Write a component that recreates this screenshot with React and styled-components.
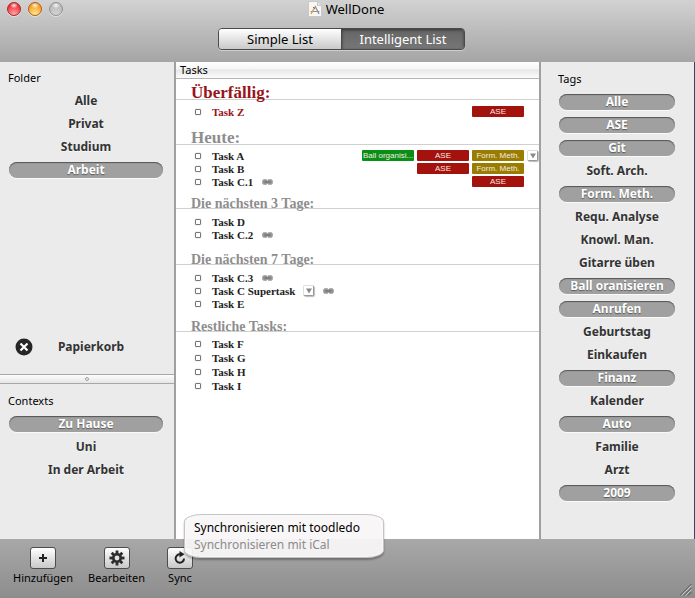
import React, { useState } from "react";
import styled, { createGlobalStyle, css } from "styled-components";

const UI_FONT = '"Noto Sans", "Open Sans", sans-serif';
const TASK_FONT = '"Liberation Serif", serif';

const GlobalStyle = createGlobalStyle`
  * { box-sizing: border-box; }
  body { margin: 0; background: #ebebeb; font-family: ${UI_FONT}; color: #000; }
  button { font-family: inherit; color: inherit; margin: 0; padding: 0; border: 0; background: none; }
  ul { list-style: none; margin: 0; padding: 0; }
`;

const Shell = styled.div`
  display: flex;
  flex-direction: column;
  min-height: 100vh;
`;

const Header = styled.header`
  height: 62px;
  flex: none;
  background: linear-gradient(#d2d2d2, #a5a5a5);
`;

const TitleBar = styled.div`
  display: grid;
  grid-template-columns: 1fr auto 1fr;
  align-items: center;
  height: 18px;
  padding: 0 10px 0 7px;
`;

const Lights = styled.div`
  display: flex;
  gap: 7px;
`;

const lightColors = {
  red: ["#ffa6a8", "#ee2b35", "#a5282c"],
  yellow: ["#ffe98f", "#f6981f", "#a8621c"],
  gray: ["#d4d4d4", "#b9b9b9", "#929292"],
};

const Light = styled.button`
  width: 14px;
  height: 14px;
  border-radius: 50%;
  border: 1px solid ${(p) => lightColors[p.$tone][2]};
  background:
    radial-gradient(ellipse 4px 3px at 50% 20%, rgba(255, 255, 255, 0.9), rgba(255, 255, 255, 0) 100%),
    radial-gradient(circle at 50% 90%, ${(p) => lightColors[p.$tone][0]}, ${(p) => lightColors[p.$tone][1]} 75%);
  box-shadow: 0 1px 0 rgba(255, 255, 255, 0.5);
`;

const Title = styled.h1`
  display: flex;
  align-items: center;
  gap: 4px;
  margin: 0;
  font-size: 13px;
  line-height: 18px;
  font-weight: 400;
`;

const SegmentRow = styled.div`
  display: flex;
  justify-content: center;
  padding: 10px 12px 0 0;
`;

const Segments = styled.div`
  display: flex;
  width: 247px;
  height: 22px;
  border: 1px solid #4a4a4a;
  border-radius: 4px;
  overflow: hidden;
  box-shadow: 0 1px 0 rgba(255, 255, 255, 0.4);
`;

const Segment = styled.button`
  flex: 1;
  font-size: 13px;
  line-height: 20px;
  background: linear-gradient(#ffffff, #c9c9c9);
  ${(p) =>
    p.$on &&
    css`
      color: #fff;
      border-left: 1px solid #4a4a4a;
      background: linear-gradient(#656565, #777777);
      box-shadow: inset 0 1px 3px rgba(0, 0, 0, 0.5);
    `}
`;

const Body = styled.div`
  display: flex;
  flex: 1;
`;

const Sidebar = styled.aside`
  display: flex;
  flex-direction: column;
  flex: none;
  width: 176px;
  background: #ebebeb;
  border-right: 2px solid #a0a0a0;
`;

const TagBar = styled.aside`
  flex: none;
  width: 156px;
  padding: 9px 19px 0 18px;
  background: #ebebeb;
  border-left: 2px solid #a0a0a0;
  border-right: 1px solid #32496b;
`;

const Group = styled.section`
  display: flex;
  flex-direction: column;
  padding: 8px 11px 0 9px;
  ${(p) => (p.$grow ? "flex: 1;" : "height: 155px; padding-top: 9px;")}
`;

const GroupTitle = styled.h2`
  margin: 0 -1px 7px;
  font-size: 11px;
  line-height: 16px;
  font-weight: 400;
`;

const PillList = styled.ul`
  display: grid;
  gap: 7px;
`;

const Pill = styled.button`
  display: block;
  width: 100%;
  height: 16px;
  border-radius: 8px;
  font-size: 12px;
  line-height: 16px;
  font-weight: 700;
  text-align: center;
  color: #333;
  text-shadow: 0 1px 0 rgba(255, 255, 255, 0.6);
  ${(p) =>
    p.$on &&
    css`
      color: #fff;
      text-shadow: 0 1px 1px #5a5a5a;
      background: #a0a0a0;
      box-shadow: inset 0 1px 1px #555, 0 1px 0 #fafafa;
    `}
`;

const Trash = styled.button`
  display: grid;
  grid-template-columns: 18px 1fr 12px;
  align-items: center;
  width: 100%;
  margin: auto 0 17px;
  padding: 0 2px 0 6px;
  font-size: 12px;
  line-height: 20px;
  font-weight: 700;
  color: #333;
`;

const Splitter = styled.div`
  display: flex;
  align-items: center;
  justify-content: center;
  height: 10px;
  border: solid #a8a8a8;
  border-width: 1px 0;
  background: linear-gradient(#fdfdfd, #e6e6e6);
`;

const SplitterDot = styled.span`
  width: 4px;
  height: 4px;
  border: 1px solid #a0a0a0;
  border-radius: 50%;
`;

const Main = styled.main`
  flex: 1;
  min-width: 0;
  background: #fff;
`;

const ColumnHeader = styled.h2`
  margin: 0;
  height: 17px;
  padding-left: 4px;
  border-bottom: 1px solid #b4b4b4;
  font-size: 11px;
  line-height: 16px;
  font-weight: 400;
  background: linear-gradient(#ffffff, #f6f6f6 40%, #e8e8e8 50%, #fbfbfb);
`;

const SectionTitle = styled.h3`
  display: flex;
  align-items: flex-end;
  height: ${(p) => p.$height}px;
  margin: 0;
  padding-left: 15px;
  border-bottom: 1px solid #d0d0d0;
  font-family: ${TASK_FONT};
  font-size: ${(p) => (p.$large ? 17 : 14)}px;
  line-height: ${(p) => (p.$large ? 13 : 8)}px;
  color: ${(p) => (p.$alert ? "#98141a" : "#8e8e8e")};
`;

const TaskList = styled.ul`
  padding-top: ${(p) => p.$top}px;
`;

const TaskRow = styled.li`
  display: flex;
  align-items: center;
  height: ${(p) => (p.$loose ? 14 : 13)}px;
  padding-left: 19px;
  font-family: ${TASK_FONT};
  font-size: 11px;
  font-weight: 700;
  color: ${(p) => (p.$alert ? "#98141a" : "#222")};
`;

const TaskLabel = styled.label`
  display: flex;
  align-items: center;
  gap: 11px;
`;

const Check = styled.input`
  appearance: none;
  width: 6px;
  height: 6px;
  margin: 0;
  border: 1px solid #777;
  border-radius: 1px;
  box-shadow: 0 0 1px #777;
  &:checked { background: #777; }
`;

const Link = styled.span`
  display: flex;
  margin-left: 9px;
`;

const Caret = styled.button`
  display: flex;
  align-items: center;
  justify-content: center;
  width: 11px;
  height: 11px;
  margin-left: ${(p) => (p.$inline ? 8 : 0)}px;
  border: 1px solid #ddd;
  border-right-color: #999;
  border-bottom-color: #999;
  border-radius: 2px;
  background: #fff;
  box-shadow: 1px 1px 1px #bbb;
`;

const Chips = styled.div`
  display: flex;
  gap: 3px;
  margin-left: auto;
`;

const ChipSlot = styled.span`
  width: 12px;
`;

const chipColors = { red: "#a3120d", olive: "#9a7d00", green: "#0a8f14" };

const Chip = styled.span`
  width: 52px;
  height: 11px;
  border-radius: 1px;
  overflow: hidden;
  white-space: nowrap;
  text-align: center;
  font-family: "Liberation Sans", sans-serif;
  font-size: 8px;
  line-height: 11px;
  font-weight: 400;
  color: #f5e9e4;
  background: ${(p) => chipColors[p.$tone]};
`;

const Footer = styled.footer`
  display: flex;
  align-items: flex-start;
  justify-content: space-between;
  height: 59px;
  flex: none;
  padding: 8px 3px 2px 13px;
  background: linear-gradient(#a8a8a8, #8d8d8d);
`;

const Tools = styled.div`
  display: flex;
  gap: 15px;
`;

const Tool = styled.div`
  display: flex;
  flex-direction: column;
  align-items: center;
  min-width: 40px;
  font-size: 11px;
  line-height: 18px;
`;

const Anchor = styled.div`
  position: relative;
`;

const ToolButton = styled.button`
  display: flex;
  align-items: center;
  justify-content: center;
  width: 26px;
  height: 22px;
  border: 1px solid #4d4d4d;
  border-radius: 3px;
  background: linear-gradient(#ffffff, #c8c8c8);
`;

const SyncMenu = styled.div`
  position: absolute;
  left: 17px;
  top: -33px;
  display: flex;
  flex-direction: column;
  align-items: flex-start;
  min-width: 200px;
  padding: 4px 18px 4px 9px;
  border: 1px solid #c4c4c4;
  border-radius: 18px / 8px;
  background: rgba(248, 245, 247, 0.94);
  box-shadow: 0 2px 2px rgba(0, 0, 0, 0.3), inset 0 0 3px #fff;
`;

const SyncItem = styled.button`
  font-size: 12px;
  line-height: 17px;
  white-space: nowrap;
  color: ${(p) => (p.disabled ? "#8c8c8c" : "#000")};
`;

const Grip = styled.svg`
  align-self: flex-end;
`;

const AppIcon = () => (
  <svg width="14" height="16" viewBox="0 0 14 16" aria-hidden="true">
    <path d="M.5.5h9l4 4v11H.5z" fill="#f7f7f5" stroke="#c8c8c8" />
    <path d="M9.5.5v4h4" fill="#e4e4e4" stroke="#c8c8c8" />
    <path d="M2.5 10.5h9" stroke="#9c918a" />
    <path d="M3 13l4-7" stroke="#d89a40" strokeWidth="1.3" />
    <path d="M7 5l4 8" stroke="#858ca0" strokeWidth="1.3" />
    <path d="M5 6l2 2" stroke="#bf5648" />
  </svg>
);

const TrashIcon = () => (
  <svg width="18" height="18" viewBox="0 0 18 18" aria-hidden="true">
    <circle cx="9" cy="9" r="8.5" fill="#262626" />
    <path d="M5.5 5.5l7 7m0-7l-7 7" stroke="#fff" strokeWidth="2.2" />
  </svg>
);

const LinkIcon = () => (
  <svg width="11" height="6" viewBox="0 0 11 6" role="img" aria-label="Link">
    <rect x=".5" y=".5" width="5" height="5" rx="2" fill="#959595" stroke="#a5a5a5" />
    <rect x="5.5" y=".5" width="5" height="5" rx="2" fill="#959595" stroke="#a5a5a5" />
    <path d="M2.5 3h6" stroke="#777" strokeWidth="1.5" />
  </svg>
);

const CaretIcon = () => (
  <svg width="6" height="6" viewBox="0 0 6 6" aria-hidden="true">
    <path d="M0 .5h6L3 5.5z" fill="#8a8a8a" />
  </svg>
);

const PlusIcon = () => (
  <svg width="8" height="8" viewBox="0 0 8 8" aria-hidden="true">
    <path d="M4 0v8M0 4h8" stroke="#222" strokeWidth="2" />
  </svg>
);

const GearIcon = () => (
  <svg width="16" height="16" viewBox="-8 -8 16 16" aria-hidden="true">
    <g fill="#2e2e2e">
      {[0, 45, 90, 135].map((a) => (
        <rect key={a} x="-1.4" y="-7.5" width="2.8" height="15" transform={`rotate(${a})`} />
      ))}
      <circle r="5" />
    </g>
    <circle r="2.4" fill="#e4e4e4" />
  </svg>
);

const SyncIcon = () => (
  <svg width="12" height="14" viewBox="0 0 12 14" aria-hidden="true">
    <path d="M10 7.5a4.2 4.2 0 1 1-4-4.2" fill="none" stroke="#222" strokeWidth="2" />
    <path d="M5.5 0l5 3.3-5 3.3z" fill="#222" />
  </svg>
);

const sections = [
  {
    title: "Überfällig:", large: true, alert: true, height: 21, top: 5,
    tasks: [{ name: "Task Z", chips: [["ASE", "red"]] }],
  },
  {
    title: "Heute:", large: true, height: 27, top: 4,
    tasks: [
      { name: "Task A", chips: [["Ball organisi...", "green"], ["ASE", "red"], ["Form. Meth.", "olive"]], more: true },
      { name: "Task B", chips: [["ASE", "red"], ["Form. Meth.", "olive"]] },
      { name: "Task C.1", link: true, chips: [["ASE", "red"]] },
    ],
  },
  {
    title: "Die nächsten 3 Tage:", height: 21, top: 6,
    tasks: [{ name: "Task D" }, { name: "Task C.2", link: true }],
  },
  {
    title: "Die nächsten 7 Tage:", height: 24, top: 6,
    tasks: [{ name: "Task C.3", link: true }, { name: "Task C Supertask", expand: true, link: true }, { name: "Task E" }],
  },
  {
    title: "Restliche Tasks:", height: 22, top: 5, loose: true,
    tasks: [{ name: "Task F" }, { name: "Task G" }, { name: "Task H" }, { name: "Task I" }],
  },
];

const tagNames = [
  "Alle", "ASE", "Git", "Soft. Arch.", "Form. Meth.", "Requ. Analyse", "Knowl. Man.", "Gitarre üben",
  "Ball oranisieren", "Anrufen", "Geburtstag", "Einkaufen", "Finanz", "Kalender", "Auto", "Familie", "Arzt", "2009",
];
const initialTags = ["Alle", "ASE", "Git", "Form. Meth.", "Ball oranisieren", "Anrufen", "Finanz", "Auto", "2009"];

function Pills({ names, selected, onPick }) {
  return (
    <PillList>
      {names.map((name) => (
        <li key={name}>
          <Pill $on={selected.includes(name)} aria-pressed={selected.includes(name)} onClick={() => onPick(name)}>
            {name}
          </Pill>
        </li>
      ))}
    </PillList>
  );
}

function Task({ task, alert, loose }) {
  return (
    <TaskRow $alert={alert} $loose={loose}>
      <TaskLabel>
        <Check type="checkbox" />
        {task.name}
      </TaskLabel>
      {task.expand && <Caret $inline aria-label="Unteraufgaben"><CaretIcon /></Caret>}
      {task.link && <Link><LinkIcon /></Link>}
      {task.chips && (
        <Chips>
          {task.chips.map(([text, tone]) => <Chip key={text} $tone={tone}>{text}</Chip>)}
          <ChipSlot>{task.more && <Caret aria-label="Weitere Tags"><CaretIcon /></Caret>}</ChipSlot>
        </Chips>
      )}
    </TaskRow>
  );
}

export default function App() {
  const [view, setView] = useState("Intelligent List");
  const [folder, setFolder] = useState("Arbeit");
  const [context, setContext] = useState("Zu Hause");
  const [tags, setTags] = useState(initialTags);
  const toggleTag = (name) =>
    setTags((now) => (now.includes(name) ? now.filter((t) => t !== name) : [...now, name]));

  return (
    <Shell>
      <GlobalStyle />
      <Header>
        <TitleBar>
          <Lights>
            <Light $tone="red" aria-label="Schließen" />
            <Light $tone="yellow" aria-label="Minimieren" />
            <Light $tone="gray" aria-label="Zoomen" />
          </Lights>
          <Title><AppIcon />WellDone</Title>
        </TitleBar>
        <SegmentRow>
          <Segments>
            {["Simple List", "Intelligent List"].map((name) => (
              <Segment key={name} $on={view === name} aria-pressed={view === name} onClick={() => setView(name)}>
                {name}
              </Segment>
            ))}
          </Segments>
        </SegmentRow>
      </Header>
      <Body>
        <Sidebar>
          <Group $grow>
            <GroupTitle>Folder</GroupTitle>
            <Pills names={["Alle", "Privat", "Studium", "Arbeit"]} selected={[folder]} onPick={setFolder} />
            <Trash><TrashIcon />Papierkorb</Trash>
          </Group>
          <Splitter><SplitterDot /></Splitter>
          <Group>
            <GroupTitle>Contexts</GroupTitle>
            <Pills names={["Zu Hause", "Uni", "In der Arbeit"]} selected={[context]} onPick={setContext} />
          </Group>
        </Sidebar>
        <Main>
          <ColumnHeader>Tasks</ColumnHeader>
          {sections.map((s) => (
            <section key={s.title}>
              <SectionTitle $height={s.height} $large={s.large} $alert={s.alert}>{s.title}</SectionTitle>
              <TaskList $top={s.top}>
                {s.tasks.map((t) => <Task key={t.name} task={t} alert={s.alert} loose={s.loose} />)}
              </TaskList>
            </section>
          ))}
        </Main>
        <TagBar>
          <GroupTitle>Tags</GroupTitle>
          <Pills names={tagNames} selected={tags} onPick={toggleTag} />
        </TagBar>
      </Body>
      <Footer>
        <Tools>
          <Tool>
            <ToolButton aria-labelledby="tool-add"><PlusIcon /></ToolButton>
            <span id="tool-add">Hinzufügen</span>
          </Tool>
          <Tool>
            <ToolButton aria-labelledby="tool-edit"><GearIcon /></ToolButton>
            <span id="tool-edit">Bearbeiten</span>
          </Tool>
          <Tool>
            <Anchor>
              <ToolButton aria-labelledby="tool-sync" aria-haspopup="menu"><SyncIcon /></ToolButton>
              <SyncMenu role="menu">
                <SyncItem role="menuitem">Synchronisieren mit toodledo</SyncItem>
                <SyncItem role="menuitem" disabled>Synchronisieren mit iCal</SyncItem>
              </SyncMenu>
            </Anchor>
            <span id="tool-sync">Sync</span>
          </Tool>
        </Tools>
        <Grip width="12" height="12" viewBox="0 0 12 12" aria-hidden="true">
          <path d="M0 11.5L11.5 0M4 11.5L11.5 4M8 11.5L11.5 8" stroke="#555" />
          <path d="M1.5 11.5l10-10M5.5 11.5l6-6" stroke="#ccc" />
        </Grip>
      </Footer>
    </Shell>
  );
}
